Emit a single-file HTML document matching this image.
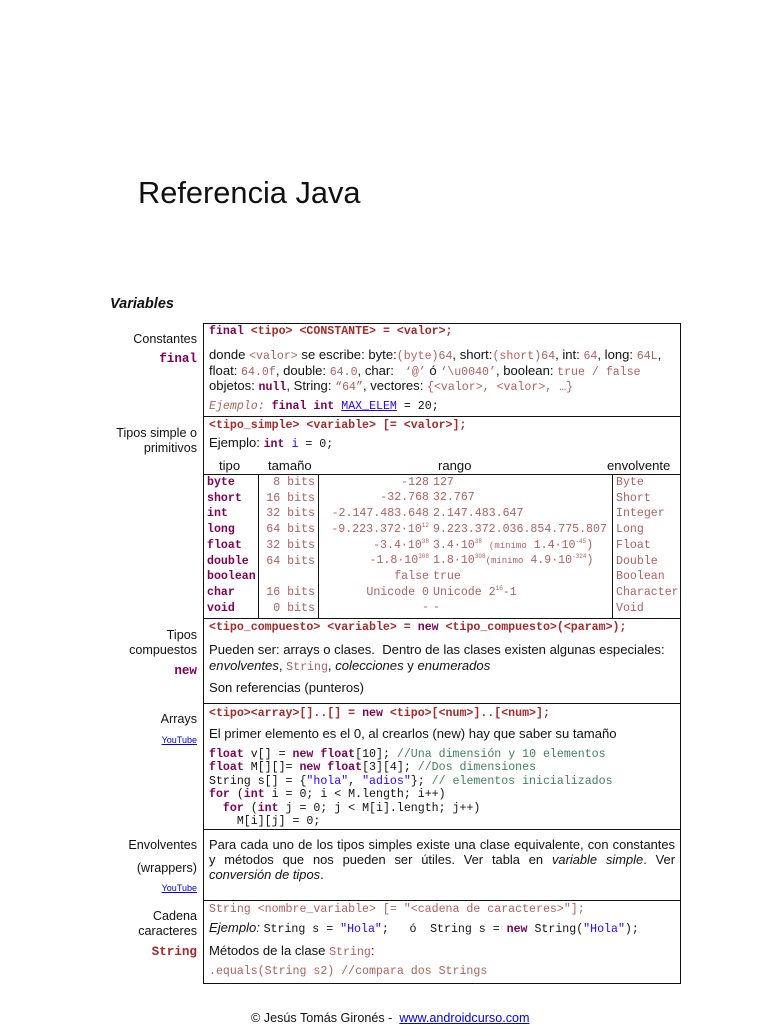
<!DOCTYPE html>
<html><head><meta charset="utf-8"><style>
body{margin:0;background:#fff;width:768px;height:1024px;position:relative;overflow:hidden;font-family:"Liberation Sans",sans-serif;color:#111}
.a{position:absolute;white-space:nowrap;line-height:14px}
.s{font-size:13.1px}
.m{font-family:"Liberation Mono",monospace;font-size:11.6px}
.lab{position:absolute;right:571px;text-align:right;font-size:12.6px;line-height:14px;white-space:nowrap}
.k{color:#7f0055;font-weight:bold}
.rb{color:#a52a2a;font-weight:bold}
.l{color:#b06060}
.b{color:#2a00ff}
.g{color:#3f7f5f}
.yt{font-size:9px;color:#00e;text-decoration:underline}
.h{position:absolute;left:203px;width:478px;height:1px;background:#111}
.v{position:absolute;width:1px;background:#111}
.sp{position:relative;top:-5px;font-size:6px;line-height:0}
.t{line-height:15.7px}
.R{position:absolute;left:318px;width:111px;text-align:right;white-space:nowrap;line-height:14px}
.Q{position:absolute;left:433px;white-space:nowrap;line-height:14px}
.mi{font-size:9px}
</style></head><body>
<div class="a" style="left:138px;top:175px;font-size:30.8px;line-height:36px">Referencia Java</div>
<div class="a" style="left:110px;top:297px;font-size:14.5px;font-weight:bold;font-style:italic">Variables</div>

<div class="v" style="left:203px;top:323px;height:661px"></div>
<div class="v" style="left:680px;top:323px;height:661px"></div>
<div class="h" style="top:323px"></div>
<div class="h" style="top:416px"></div>
<div class="h" style="top:474px"></div>
<div class="h" style="top:618px"></div>
<div class="h" style="top:703px"></div>
<div class="h" style="top:829px"></div>
<div class="h" style="top:900px"></div>
<div class="h" style="top:983px"></div>
<div class="v" style="left:258px;top:474px;height:144px"></div>
<div class="v" style="left:318px;top:474px;height:144px"></div>
<div class="v" style="left:612px;top:474px;height:144px"></div>

<div class="lab" style="top:332px">Constantes</div>
<div class="lab m k" style="top:352px">final</div>
<div class="a m rb" style="left:209px;top:325px"><span class="k">final</span> &lt;tipo&gt; &lt;CONSTANTE&gt; = &lt;valor&gt;;</div>
<div class="a s" style="left:209px;top:348px">donde <span class="m l">&lt;valor&gt;</span> se escribe: byte:<span class="m l">(byte)64</span>, short:<span class="m l">(short)64</span>, int: <span class="m l">64</span>, long: <span class="m l">64L</span>,</div>
<div class="a s" style="left:209px;top:364px">float: <span class="m l">64.0f</span>, double: <span class="m l">64.0</span>, char: &nbsp;&nbsp;<span class="m l">‘@’</span> ó <span class="m l">‘\u0040’</span>, boolean: <span class="m l">true / false</span></div>
<div class="a s" style="left:209px;top:379px">objetos: <span class="m k">null</span>, String: <span class="m l">“64”</span>, vectores: <span class="m l">{&lt;valor&gt;, &lt;valor&gt;, …}</span></div>
<div class="a m" style="left:209px;top:400px"><i class="l">Ejemplo:</i> <span class="k">final int</span> <span class="b" style="text-decoration:underline">MAX_ELEM</span> = 20;</div>

<div class="lab" style="top:426px">Tipos simple o</div>
<div class="lab" style="top:441px">primitivos</div>
<div class="a m rb" style="left:209px;top:419px">&lt;tipo_simple&gt; &lt;variable&gt; [= &lt;valor&gt;];</div>
<div class="a s" style="left:209px;top:436px">Ejemplo: <span class="m"><span class="k">int</span> <span class="b">i</span> = 0;</span></div>
<div class="a s" style="left:219px;top:459px">tipo</div>
<div class="a s" style="left:268px;top:459px">tamaño</div>
<div class="a s" style="left:438px;top:459px">rango</div>
<div class="a s" style="left:607px;top:459px">envolvente</div>
<div class="a m k t" style="left:207px;top:475px">byte<br>short<br>int<br>long<br>float<br>double<br>boolean<br>char<br>void</div>
<div class="a m l t" style="left:258px;top:475px;width:57px;text-align:right">8 bits<br>16 bits<br>32 bits<br>64 bits<br>32 bits<br>64 bits<br>&nbsp;<br>16 bits<br>0 bits</div>
<div class="m l">
<div class="R" style="top:476px">-128</div><div class="Q" style="top:476px">127</div>
<div class="R" style="top:491px">-32.768</div><div class="Q" style="top:491px">32.767</div>
<div class="R" style="top:507px">-2.147.483.648</div><div class="Q" style="top:507px">2.147.483.647</div>
<div class="R" style="top:523px">-9.223.372·10<span class="sp">12</span></div><div class="Q" style="top:523px">9.223.372.036.854.775.807</div>
<div class="R" style="top:539px">-3.4·10<span class="sp">38</span></div><div class="Q" style="top:539px">3.4·10<span class="sp">38</span> <span class="mi">(mínimo</span> 1.4·10<span class="sp">-45</span>)</div>
<div class="R" style="top:554px">-1.8·10<span class="sp">308</span></div><div class="Q" style="top:554px">1.8·10<span class="sp">308</span><span class="mi">(mínimo</span> 4.9·10<span class="sp">-324</span>)</div>
<div class="R" style="top:570px">false</div><div class="Q" style="top:570px">true</div>
<div class="R" style="top:586px">Unicode 0</div><div class="Q" style="top:586px">Unicode 2<span class="sp">16</span>-1</div>
<div class="R" style="top:601px">-</div><div class="Q" style="top:601px">-</div>
</div>
<div class="a m l t" style="left:616px;top:475px">Byte<br>Short<br>Integer<br>Long<br>Float<br>Double<br>Boolean<br>Character<br>Void</div>

<div class="lab" style="top:628px">Tipos</div>
<div class="lab" style="top:643px">compuestos</div>
<div class="lab m k" style="top:664px">new</div>
<div class="a m rb" style="left:209px;top:621px">&lt;tipo_compuesto&gt; &lt;variable&gt; = <span class="k">new</span> &lt;tipo_compuesto&gt;(&lt;param&gt;);</div>
<div class="a s" style="left:209px;top:643px">Pueden ser: arrays o clases. &nbsp;Dentro de las clases existen algunas especiales:</div>
<div class="a s" style="left:209px;top:659px"><i>envolventes</i>, <span class="m l">String</span>, <i>colecciones</i> y <i>enumerados</i></div>
<div class="a s" style="left:209px;top:681px">Son referencias (punteros)</div>

<div class="lab" style="top:712px">Arrays</div>
<div class="lab yt" style="top:733px">YouTube</div>
<div class="a m rb" style="left:209px;top:707px">&lt;tipo&gt;&lt;array&gt;[]..[] = <span class="k">new</span> &lt;tipo&gt;[&lt;num&gt;]..[&lt;num&gt;];</div>
<div class="a s" style="left:209px;top:727px">El primer elemento es el 0, al crearlos (new) hay que saber su tamaño</div>
<div class="a m" style="left:209px;top:748px;line-height:13.4px"><span class="k">float</span> v[] = <span class="k">new float</span>[10]; <span class="g">//Una dimensión y 10 elementos</span><br><span class="k">float</span> M[][]= <span class="k">new float</span>[3][4]; <span class="g">//Dos dimensiones</span><br>String s[] = {<span class="b">"hola"</span>, <span class="b">"adios"</span>}; <span class="g">// elementos inicializados</span><br><span class="k">for</span> (<span class="k">int</span> i = 0; i &lt; M.length; i++)<br>&nbsp;&nbsp;<span class="k">for</span> (<span class="k">int</span> j = 0; j &lt; M[i].length; j++)<br>&nbsp;&nbsp;&nbsp;&nbsp;M[i][j] = 0;</div>

<div class="lab" style="top:838px">Envolventes</div>
<div class="lab" style="top:861px">(wrappers)</div>
<div class="lab yt" style="top:881px">YouTube</div>
<div class="a" style="left:209px;top:838px;width:466px;font-size:12.9px;text-align:justify;text-align-last:justify;white-space:nowrap">Para cada uno de los tipos simples existe una clase equivalente, con constantes</div>
<div class="a" style="left:209px;top:853px;width:466px;font-size:12.9px;text-align:justify;text-align-last:justify;white-space:nowrap">y métodos que nos pueden ser útiles. Ver tabla en <i>variable simple</i>. Ver</div>
<div class="a" style="left:209px;top:868px;font-size:12.9px"><i>conversión de tipos</i>.</div>

<div class="lab" style="top:909px">Cadena</div>
<div class="lab" style="top:924px">caracteres</div>
<div class="lab m rb" style="top:945px">String</div>
<div class="a m l" style="left:209px;top:903px">String &lt;nombre_variable&gt; [= "&lt;cadena de caracteres&gt;"];</div>
<div class="a s" style="left:209px;top:921px"><i>Ejemplo:</i> <span class="m">String s = <span class="b">"Hola"</span>; &nbsp;&nbsp;<span style="font-family:'Liberation Sans'">ó</span> &nbsp;String s = <span class="k">new</span> String(<span class="b">"Hola"</span>);</span></div>
<div class="a s" style="left:209px;top:944px">Métodos de la clase <span class="m l">String</span>:</div>
<div class="a m l" style="left:209px;top:965px">.equals(String s2) //compara dos Strings</div>

<div class="a" style="left:251px;top:1011px;font-size:12.6px">© Jesús Tomás Gironés - &nbsp;<span style="color:#00e;text-decoration:underline">www.androidcurso.com</span></div>
</body></html>
